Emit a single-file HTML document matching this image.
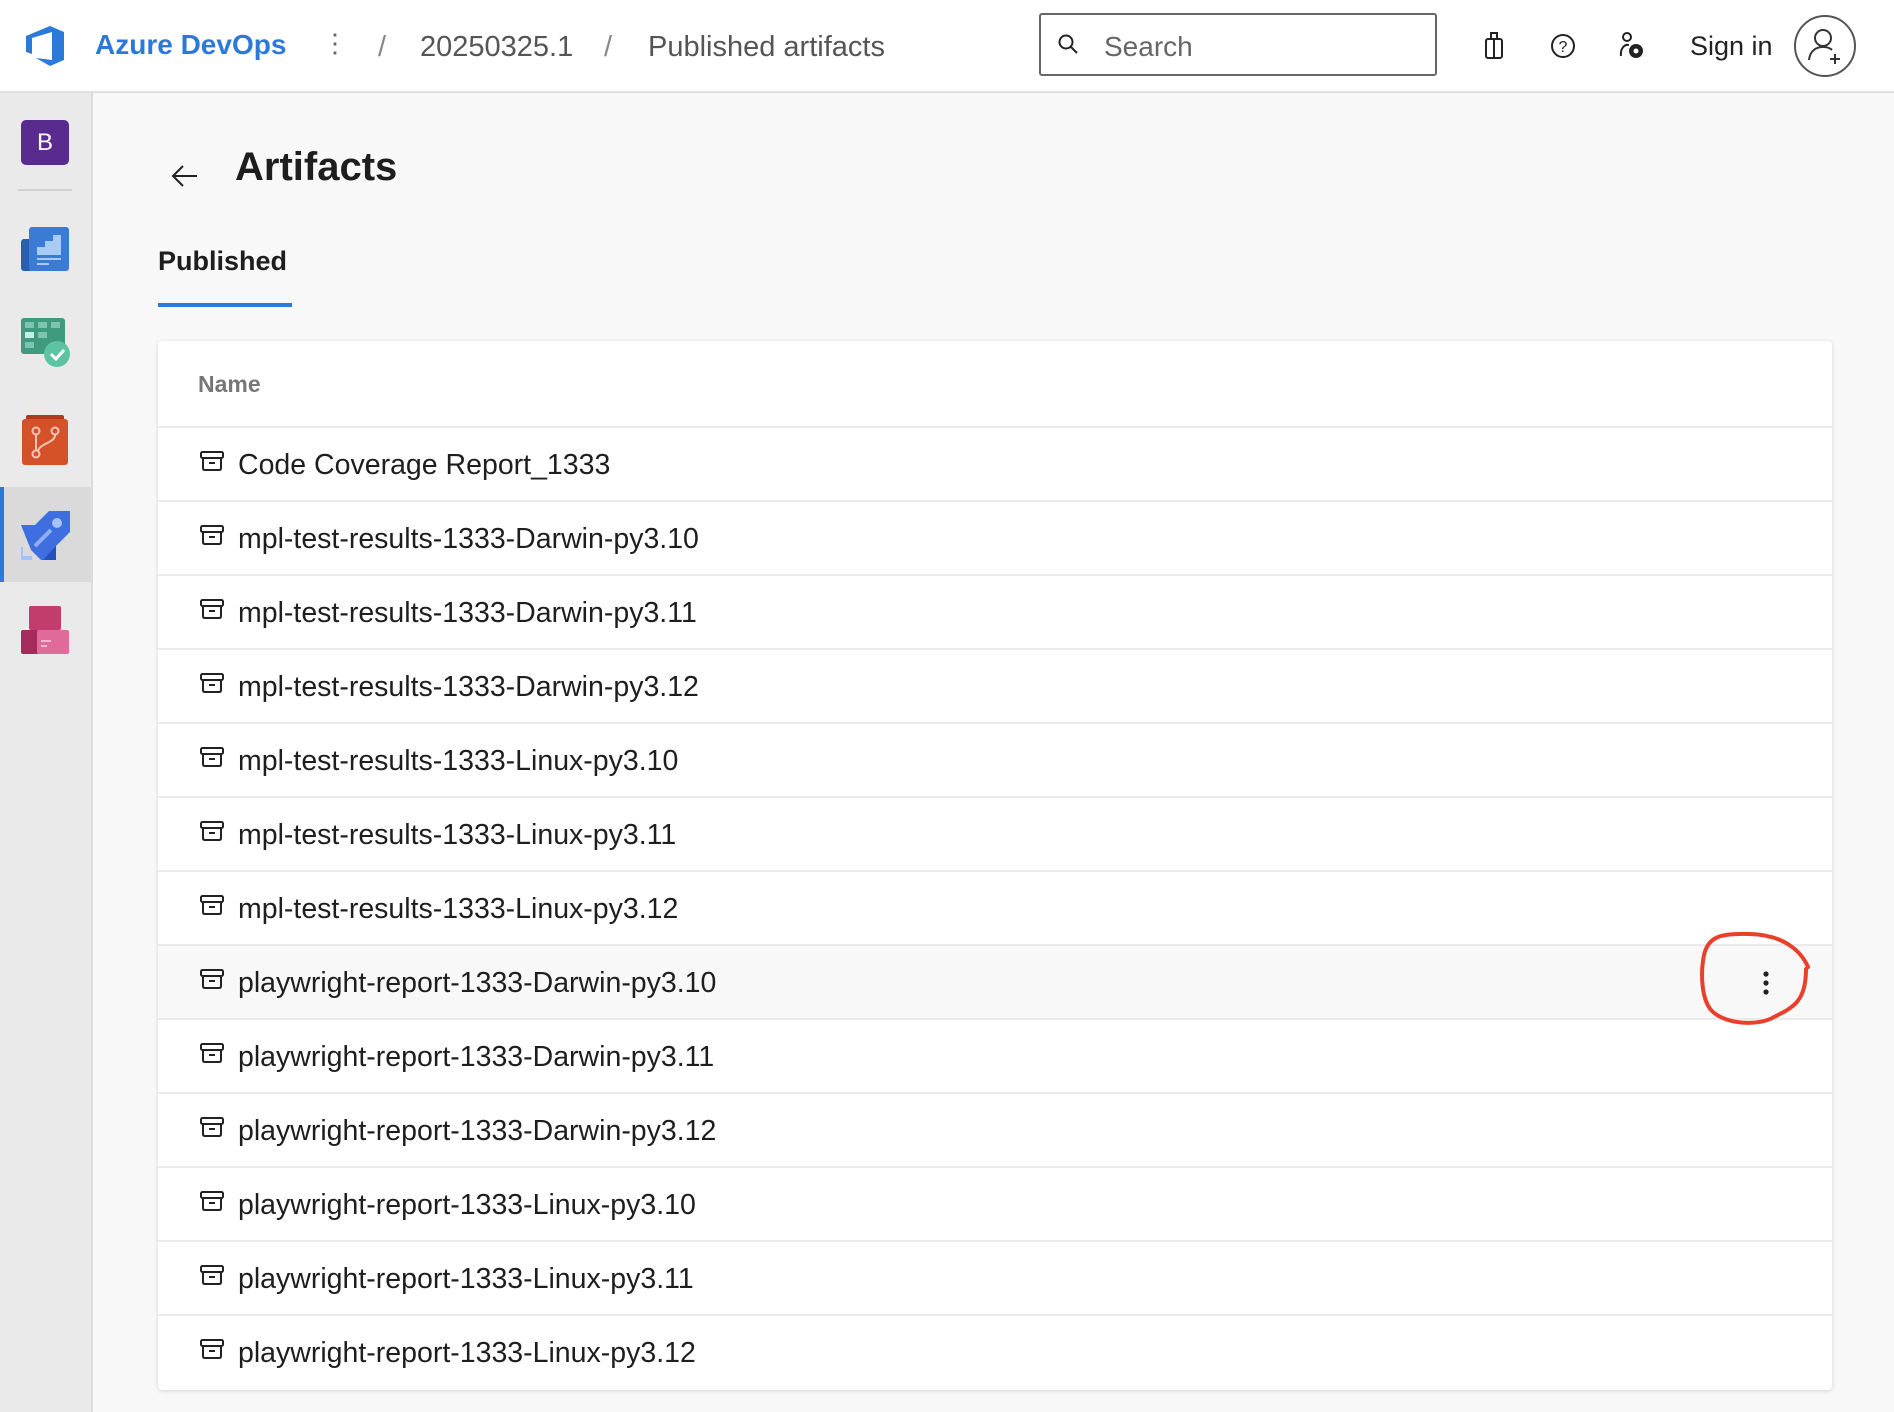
<!DOCTYPE html>
<html><head><meta charset="utf-8"><style>
*{box-sizing:border-box;margin:0;padding:0}
body{width:1894px;height:1412px;background:#f8f8f8;font-family:"Liberation Sans",sans-serif;position:relative;overflow:hidden;color:#1e1e1e}
.hdr{position:absolute;left:0;top:0;width:1894px;height:93px;background:#fff;border-bottom:2px solid #e0e0e0}
.side{position:absolute;left:0;top:93px;width:93px;height:1319px;background:#eaeaea;border-right:2px solid #dcdcdc}
.t{position:absolute;white-space:nowrap}
.card{position:absolute;left:158px;top:341px;width:1674px;height:1049px;background:#fff;border-radius:4px;box-shadow:0 1px 4px rgba(0,0,0,.15)}
.row{position:absolute;left:0;width:1674px;height:74px;border-top:2px solid #ebebeb}
.row span{position:absolute;left:80px;top:21px;font-size:28.5px;color:#1e1e1e}
.row svg{position:absolute;left:41px;top:22px}
</style></head><body>
<div class="hdr">
<svg style="position:absolute;left:24px;top:24px" width="44" height="44" viewBox="0 0 44 44"><path d="M26 2 L40 8 V36 L26 42 L12 34 L28 36 V8 L8 14 V30 L2 28 V12 Z" fill="#2b79d8"/></svg>
<div class="t" style="left:95px;top:29px;font-size:28px;font-weight:bold;color:#2b79d8">Azure DevOps</div>
<div class="t" style="left:322px;top:28px;font-size:26px;color:#666">⋮</div>
<div class="t" style="left:378px;top:31px;font-size:29px;color:#888">/</div>
<div class="t" style="left:420px;top:31px;font-size:29px;color:#555">20250325.1</div>
<div class="t" style="left:604px;top:31px;font-size:29px;color:#888">/</div>
<div class="t" style="left:648px;top:31px;font-size:29px;color:#555">Published artifacts</div>
<div style="position:absolute;left:1039px;top:13px;width:398px;height:63px;border:2px solid #666;border-radius:3px"></div>
<svg style="position:absolute;left:1057px;top:33px" width="22" height="22" viewBox="0 0 22 22"><circle cx="9" cy="9" r="6.5" fill="none" stroke="#222" stroke-width="2"/><path d="M14 14 L20 20" stroke="#222" stroke-width="2"/></svg>
<div class="t" style="left:1104px;top:31px;font-size:28px;color:#666">Search</div>
<svg style="position:absolute;left:1483px;top:30px" width="22" height="30" viewBox="0 0 22 30"><rect x="3" y="9" width="16" height="19" rx="2" fill="none" stroke="#222" stroke-width="2"/><path d="M8 9 V3 H14 V9 M11 9 V28" fill="none" stroke="#222" stroke-width="2"/></svg>
<svg style="position:absolute;left:1549px;top:32px" width="28" height="28" viewBox="0 0 28 28"><circle cx="14" cy="14" r="11" fill="none" stroke="#222" stroke-width="2"/><text x="14" y="20" font-size="16" text-anchor="middle" font-family="Liberation Sans" fill="#222">?</text></svg>
<svg style="position:absolute;left:1617px;top:30px" width="30" height="32" viewBox="0 0 30 32"><circle cx="10" cy="7" r="4" fill="none" stroke="#222" stroke-width="2"/><path d="M4 26 C3 18 8 14 12 15" fill="none" stroke="#222" stroke-width="2"/><circle cx="19" cy="21" r="7" fill="#222"/><circle cx="19" cy="21" r="2.5" fill="#fff"/></svg>
<div class="t" style="left:1690px;top:31px;font-size:27px;color:#222">Sign in</div>
<svg style="position:absolute;left:1793px;top:14px" width="64" height="64" viewBox="0 0 64 64"><circle cx="32" cy="32" r="30" fill="none" stroke="#555" stroke-width="2"/><circle cx="30" cy="24" r="8" fill="none" stroke="#333" stroke-width="2"/><path d="M16 46 C17 36 24 33 30 33 C34 33 37 34 39 36" fill="none" stroke="#333" stroke-width="2"/><path d="M42 40 V50 M37 45 H47" stroke="#333" stroke-width="2"/></svg>
</div>
<div class="side">
<div style="position:absolute;left:21px;top:27px;width:48px;height:45px;background:#5a2b8f;border-radius:5px;color:#fff;font-size:24px;text-align:center;line-height:45px">B</div>
<div style="position:absolute;left:18px;top:96px;width:54px;height:2px;background:#d0d0d0"></div>
<svg style="position:absolute;left:21px;top:132px" width="48" height="46" viewBox="0 0 48 46"><rect x="0" y="14" width="12" height="32" rx="3" fill="#2a5fb0"/><rect x="8" y="2" width="40" height="44" rx="3" fill="#3a7bd5"/><path d="M16 22 H24 V16 H32 V10 H40 V30 H16Z" fill="#a8cbf3"/><rect x="16" y="33" width="24" height="2" fill="#a8cbf3"/><rect x="16" y="38" width="12" height="2" fill="#a8cbf3"/></svg>
<svg style="position:absolute;left:21px;top:225px" width="50" height="50" viewBox="0 0 50 50"><rect x="0" y="0" width="44" height="36" rx="3" fill="#3f9a7e"/><rect x="4" y="4" width="9" height="6" fill="#7cc4ad"/><rect x="17" y="4" width="9" height="6" fill="#7cc4ad"/><rect x="30" y="4" width="9" height="6" fill="#7cc4ad"/><rect x="4" y="14" width="9" height="6" fill="#bff0e0"/><rect x="17" y="14" width="9" height="6" fill="#7cc4ad"/><rect x="4" y="24" width="9" height="6" fill="#7cc4ad"/><circle cx="36" cy="36" r="13" fill="#5cc4a3"/><path d="M30 36 L35 41 L43 32" fill="none" stroke="#fff" stroke-width="3"/></svg>
<svg style="position:absolute;left:22px;top:322px" width="46" height="50" viewBox="0 0 46 50"><rect x="4" y="0" width="38" height="10" rx="2" fill="#b0391e"/><rect x="0" y="4" width="46" height="46" rx="3" fill="#d5512a"/><circle cx="14" cy="16" r="3.5" fill="none" stroke="#f7c5b4" stroke-width="2"/><circle cx="33" cy="16" r="3.5" fill="none" stroke="#f7c5b4" stroke-width="2"/><circle cx="14" cy="39" r="3.5" fill="none" stroke="#f7c5b4" stroke-width="2"/><path d="M14 20 V35 M33 20 C33 28 18 28 16 36" fill="none" stroke="#f7c5b4" stroke-width="2"/></svg>
<div style="position:absolute;left:0;top:394px;width:91px;height:95px;background:#dadada"></div>
<div style="position:absolute;left:0;top:394px;width:4px;height:95px;background:#2b79d8"></div>
<svg style="position:absolute;left:21px;top:418px" width="49" height="49" viewBox="0 0 49 49"><path d="M0 14 L14 14 L28 0 L49 0 L49 21 L35 35 L35 49 L20 49 L10 39 Z" fill="#3f6ee0"/><path d="M35 35 L35 49 L22 49 Z" fill="#2550c0"/><circle cx="36" cy="12" r="5" fill="#a6c2f7"/><path d="M14 35 L30 19" stroke="#8fb0f2" stroke-width="4"/><path d="M0 36 V47 H11" fill="none" stroke="#a6c2f7" stroke-width="4"/></svg>
<svg style="position:absolute;left:21px;top:513px" width="48" height="48" viewBox="0 0 48 48"><rect x="8" y="0" width="32" height="24" rx="2" fill="#c23c6e"/><rect x="0" y="24" width="24" height="24" rx="2" fill="#a62a5c"/><rect x="16" y="24" width="32" height="24" rx="2" fill="#e06b9b"/><rect x="20" y="34" width="10" height="2" fill="#f4b5cf"/><rect x="20" y="39" width="6" height="2" fill="#f4b5cf"/></svg>
</div>
<svg style="position:absolute;left:170px;top:163px" width="30" height="24" viewBox="0 0 30 24"><path d="M27 13 H4 M13 3 L3 13 L13 23" fill="none" stroke="#222" stroke-width="2"/></svg>
<div class="t" style="left:235px;top:145px;font-size:40px;font-weight:bold;color:#1e1e1e">Artifacts</div>
<div class="t" style="left:158px;top:246px;font-size:27px;font-weight:bold;color:#1e1e1e">Published</div>
<div style="position:absolute;left:158px;top:303px;width:134px;height:4px;background:#2b79d8"></div>
<div class="card">
<div class="t" style="left:40px;top:30px;font-size:23px;font-weight:bold;color:#777">Name</div>
<div class="row" style="top:85px"><svg width="26" height="22" viewBox="0 0 26 22"><rect x="2" y="2" width="22" height="6" rx="1.5" fill="none" stroke="#222" stroke-width="2"/><path d="M4 8 V18 Q4 20 6 20 H20 Q22 20 22 18 V8 M10 13 H16" fill="none" stroke="#222" stroke-width="2"/></svg><span>Code Coverage Report_1333</span></div>
<div class="row" style="top:159px"><svg width="26" height="22" viewBox="0 0 26 22"><rect x="2" y="2" width="22" height="6" rx="1.5" fill="none" stroke="#222" stroke-width="2"/><path d="M4 8 V18 Q4 20 6 20 H20 Q22 20 22 18 V8 M10 13 H16" fill="none" stroke="#222" stroke-width="2"/></svg><span>mpl-test-results-1333-Darwin-py3.10</span></div>
<div class="row" style="top:233px"><svg width="26" height="22" viewBox="0 0 26 22"><rect x="2" y="2" width="22" height="6" rx="1.5" fill="none" stroke="#222" stroke-width="2"/><path d="M4 8 V18 Q4 20 6 20 H20 Q22 20 22 18 V8 M10 13 H16" fill="none" stroke="#222" stroke-width="2"/></svg><span>mpl-test-results-1333-Darwin-py3.11</span></div>
<div class="row" style="top:307px"><svg width="26" height="22" viewBox="0 0 26 22"><rect x="2" y="2" width="22" height="6" rx="1.5" fill="none" stroke="#222" stroke-width="2"/><path d="M4 8 V18 Q4 20 6 20 H20 Q22 20 22 18 V8 M10 13 H16" fill="none" stroke="#222" stroke-width="2"/></svg><span>mpl-test-results-1333-Darwin-py3.12</span></div>
<div class="row" style="top:381px"><svg width="26" height="22" viewBox="0 0 26 22"><rect x="2" y="2" width="22" height="6" rx="1.5" fill="none" stroke="#222" stroke-width="2"/><path d="M4 8 V18 Q4 20 6 20 H20 Q22 20 22 18 V8 M10 13 H16" fill="none" stroke="#222" stroke-width="2"/></svg><span>mpl-test-results-1333-Linux-py3.10</span></div>
<div class="row" style="top:455px"><svg width="26" height="22" viewBox="0 0 26 22"><rect x="2" y="2" width="22" height="6" rx="1.5" fill="none" stroke="#222" stroke-width="2"/><path d="M4 8 V18 Q4 20 6 20 H20 Q22 20 22 18 V8 M10 13 H16" fill="none" stroke="#222" stroke-width="2"/></svg><span>mpl-test-results-1333-Linux-py3.11</span></div>
<div class="row" style="top:529px"><svg width="26" height="22" viewBox="0 0 26 22"><rect x="2" y="2" width="22" height="6" rx="1.5" fill="none" stroke="#222" stroke-width="2"/><path d="M4 8 V18 Q4 20 6 20 H20 Q22 20 22 18 V8 M10 13 H16" fill="none" stroke="#222" stroke-width="2"/></svg><span>mpl-test-results-1333-Linux-py3.12</span></div>
<div class="row" style="top:603px;background:#f8f8f8"><svg width="26" height="22" viewBox="0 0 26 22"><rect x="2" y="2" width="22" height="6" rx="1.5" fill="none" stroke="#222" stroke-width="2"/><path d="M4 8 V18 Q4 20 6 20 H20 Q22 20 22 18 V8 M10 13 H16" fill="none" stroke="#222" stroke-width="2"/></svg><span>playwright-report-1333-Darwin-py3.10</span></div>
<div class="row" style="top:677px"><svg width="26" height="22" viewBox="0 0 26 22"><rect x="2" y="2" width="22" height="6" rx="1.5" fill="none" stroke="#222" stroke-width="2"/><path d="M4 8 V18 Q4 20 6 20 H20 Q22 20 22 18 V8 M10 13 H16" fill="none" stroke="#222" stroke-width="2"/></svg><span>playwright-report-1333-Darwin-py3.11</span></div>
<div class="row" style="top:751px"><svg width="26" height="22" viewBox="0 0 26 22"><rect x="2" y="2" width="22" height="6" rx="1.5" fill="none" stroke="#222" stroke-width="2"/><path d="M4 8 V18 Q4 20 6 20 H20 Q22 20 22 18 V8 M10 13 H16" fill="none" stroke="#222" stroke-width="2"/></svg><span>playwright-report-1333-Darwin-py3.12</span></div>
<div class="row" style="top:825px"><svg width="26" height="22" viewBox="0 0 26 22"><rect x="2" y="2" width="22" height="6" rx="1.5" fill="none" stroke="#222" stroke-width="2"/><path d="M4 8 V18 Q4 20 6 20 H20 Q22 20 22 18 V8 M10 13 H16" fill="none" stroke="#222" stroke-width="2"/></svg><span>playwright-report-1333-Linux-py3.10</span></div>
<div class="row" style="top:899px"><svg width="26" height="22" viewBox="0 0 26 22"><rect x="2" y="2" width="22" height="6" rx="1.5" fill="none" stroke="#222" stroke-width="2"/><path d="M4 8 V18 Q4 20 6 20 H20 Q22 20 22 18 V8 M10 13 H16" fill="none" stroke="#222" stroke-width="2"/></svg><span>playwright-report-1333-Linux-py3.11</span></div>
<div class="row" style="top:973px"><svg width="26" height="22" viewBox="0 0 26 22"><rect x="2" y="2" width="22" height="6" rx="1.5" fill="none" stroke="#222" stroke-width="2"/><path d="M4 8 V18 Q4 20 6 20 H20 Q22 20 22 18 V8 M10 13 H16" fill="none" stroke="#222" stroke-width="2"/></svg><span>playwright-report-1333-Linux-py3.12</span></div>
</div>
<svg style="position:absolute;left:1690px;top:925px" width="130" height="106" viewBox="0 0 130 106"><circle cx="76" cy="49" r="2.6" fill="#222"/><circle cx="76" cy="58" r="2.6" fill="#222"/><circle cx="76" cy="67" r="2.6" fill="#222"/><path d="M118 42 C112 28 96 10 60 9 C30 8 18 12 14 30 C10 50 12 76 22 86 C36 100 70 101 84 92 C104 82 116 76 116 44" fill="none" stroke="#e8402a" stroke-width="4" stroke-linecap="round"/></svg>
</body></html>
